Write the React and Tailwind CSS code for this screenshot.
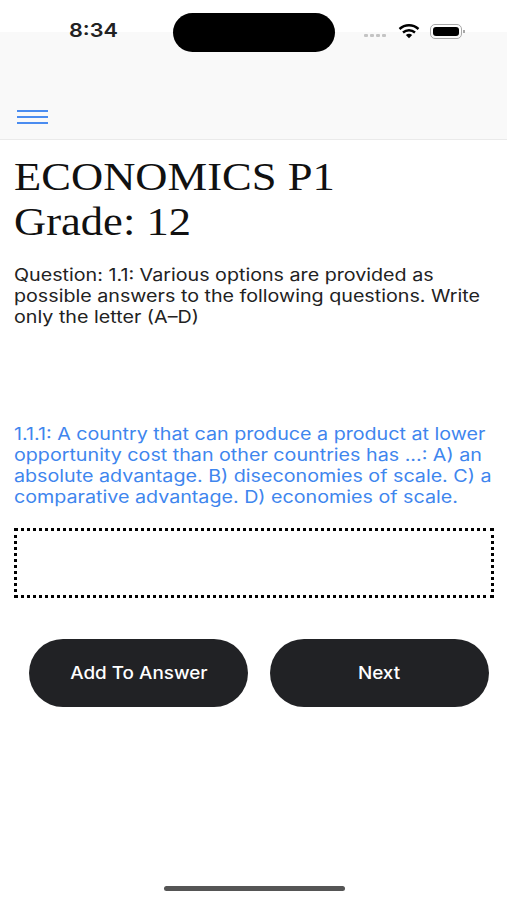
function StatusBar() {
  return (
    <div className="h-[32px] bg-white flex items-start relative">
      <span className="absolute left-[69px] top-[20px] text-[19px] leading-[22px] font-semibold text-[#222] origin-left scale-x-[1.14] font-['Inter',sans-serif]">8:34</span>
      <div className="absolute left-[173px] top-[13px] w-[162px] h-[39px] rounded-full bg-black z-10" />
      <div className="absolute left-[364px] top-[34px] flex gap-[2px]">
        {[0, 1, 2, 3].map((i) => (
          <span key={i} className="w-[4px] h-[3px] rounded-[1px] bg-[#c4c4c4]" />
        ))}
      </div>
      <svg className="absolute left-[398px] top-[23px]" width="22" height="16" viewBox="0 0 22 16" fill="none">
        <path d="M1.5 6 C7 1 15 1 20.5 6" stroke="#000" strokeWidth="2.4" />
        <path d="M5 9.5 C8.5 6.5 13.5 6.5 17 9.5" stroke="#000" strokeWidth="2.4" />
        <path d="M7.8 12 C10 10.4 12 10.4 14.2 12 L11 15.2 Z" fill="#000" />
      </svg>
      <div className="absolute left-[430px] top-[24px] w-[32px] h-[15px] rounded-[5px] border border-[#a8a8a8] p-[2px] flex">
        <div className="flex-1 rounded-[3px] bg-black" />
      </div>
      <div className="absolute left-[463px] top-[30px] w-[2px] h-[3px] bg-[#a8a8a8]" />
    </div>
  )
}

function NavBar() {
  return (
    <div className="h-[108px] bg-[#f9f9f9] border-b border-[#eaeaea] flex flex-col justify-end px-[17px] pb-[15px]">
      <div className="w-[31px] flex flex-col gap-[4px]">
        <span className="h-[2px] bg-[#4a8cf0]" />
        <span className="h-[2px] bg-[#4a8cf0]" />
        <span className="h-[2px] bg-[#4a8cf0]" />
      </div>
    </div>
  )
}

export default function App() {
  return (
    <div className="w-[507px] h-[900px] bg-white overflow-hidden relative font-['Inter',sans-serif]">
      <StatusBar />
      <NavBar />

      <div className="pl-[14px] pr-[13px]">
        <h1 className="mt-[14px] font-['Liberation_Serif',serif] text-[39px] leading-[45px] origin-left scale-x-[1.143] text-[#111] font-normal">
          ECONOMICS P1
          <br />
          Grade: 12
        </h1>

        <p className="mt-[21px] text-[17px] leading-[21px] origin-left scale-x-[1.158] text-[#222]">
          Question: 1.1: Various options are provided as
          <br />
          possible answers to the following questions. Write
          <br />
          only the letter (A–D)
        </p>

        <p className="mt-[96px] text-[17px] leading-[21px] origin-left scale-x-[1.158] text-[#3f86ee]">
          1.1.1: A country that can produce a product at lower
          <br />
          opportunity cost than other countries has ...: A) an
          <br />
          absolute advantage. B) diseconomies of scale. C) a
          <br />
          comparative advantage. D) economies of scale.
        </p>

        <div className="mt-[20px] h-[70px] border-[3px] border-dotted border-black" />
      </div>

      <div className="mt-[41px] pl-[29px] flex gap-[22px]">
        <button className="w-[219px] h-[68px] pt-[2px] shrink-0 rounded-full bg-[#212225] text-white text-[17px] font-medium">
          <span className="inline-block scale-x-[1.11]">Add To Answer</span>
        </button>
        <button className="w-[219px] h-[68px] pt-[2px] shrink-0 rounded-full bg-[#212225] text-white text-[17px] font-medium">
          <span className="inline-block scale-x-[1.11]">Next</span>
        </button>
      </div>

      <div className="absolute left-[164px] bottom-[9px] w-[181px] h-[5px] rounded-full bg-[#555]" />
    </div>
  )
}
